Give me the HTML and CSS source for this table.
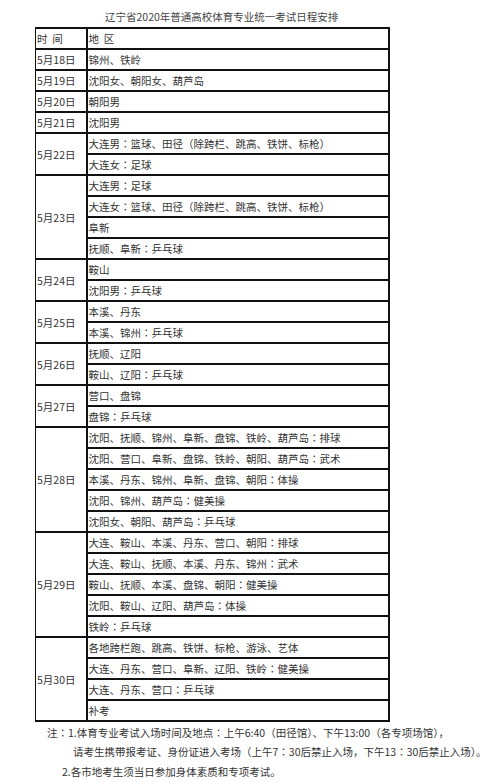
FILE: index.html
```html
<!DOCTYPE html>
<html lang="zh-CN">
<head>
<meta charset="utf-8">
<title>辽宁省2020年普通高校体育专业统一考试日程安排</title>
<link rel="stylesheet" href="styles.css">
</head>
<body>
<div class="page">
  <div class="title">辽宁省2020年普通高校体育专业统一考试日程安排</div>
  <table class="sched">
    <colgroup><col class="c-date"><col class="c-area"></colgroup>
    <tr><td class="hd">时&nbsp;&nbsp;间</td><td>地&nbsp;&nbsp;区</td></tr>
    <tr><td>5月18日</td><td>锦州、铁岭</td></tr>
    <tr><td>5月19日</td><td>沈阳女、朝阳女、葫芦岛</td></tr>
    <tr><td>5月20日</td><td>朝阳男</td></tr>
    <tr><td>5月21日</td><td>沈阳男</td></tr>
    <tr><td rowspan="2">5月22日</td><td>大连男<span class="co" lang="ja">：</span>篮球、田径（除跨栏、跳高、铁饼、标枪）</td></tr>
    <tr><td>大连女<span class="co" lang="ja">：</span>足球</td></tr>
    <tr><td rowspan="4">5月23日</td><td>大连男<span class="co" lang="ja">：</span>足球</td></tr>
    <tr><td>大连女<span class="co" lang="ja">：</span>篮球、田径（除跨栏、跳高、铁饼、标枪）</td></tr>
    <tr><td>阜新</td></tr>
    <tr><td>抚顺、阜新<span class="co" lang="ja">：</span>乒乓球</td></tr>
    <tr><td rowspan="2">5月24日</td><td>鞍山</td></tr>
    <tr><td>沈阳男<span class="co" lang="ja">：</span>乒乓球</td></tr>
    <tr><td rowspan="2">5月25日</td><td>本溪、丹东</td></tr>
    <tr><td>本溪、锦州<span class="co" lang="ja">：</span>乒乓球</td></tr>
    <tr><td rowspan="2">5月26日</td><td>抚顺、辽阳</td></tr>
    <tr><td>鞍山、辽阳<span class="co" lang="ja">：</span>乒乓球</td></tr>
    <tr><td rowspan="2">5月27日</td><td>营口、盘锦</td></tr>
    <tr><td>盘锦<span class="co" lang="ja">：</span>乒乓球</td></tr>
    <tr><td rowspan="5">5月28日</td><td>沈阳、抚顺、锦州、阜新、盘锦、铁岭、葫芦岛<span class="co" lang="ja">：</span>排球</td></tr>
    <tr><td>沈阳、营口、阜新、盘锦、铁岭、朝阳、葫芦岛<span class="co" lang="ja">：</span>武术</td></tr>
    <tr><td>本溪、丹东、锦州、阜新、盘锦、朝阳<span class="co" lang="ja">：</span>体操</td></tr>
    <tr><td>沈阳、锦州、葫芦岛<span class="co" lang="ja">：</span>健美操</td></tr>
    <tr><td>沈阳女、朝阳、葫芦岛<span class="co" lang="ja">：</span>乒乓球</td></tr>
    <tr><td rowspan="5">5月29日</td><td>大连、鞍山、本溪、丹东、营口、朝阳<span class="co" lang="ja">：</span>排球</td></tr>
    <tr><td>大连、鞍山、抚顺、本溪、丹东、锦州<span class="co" lang="ja">：</span>武术</td></tr>
    <tr><td>鞍山、抚顺、本溪、盘锦、朝阳<span class="co" lang="ja">：</span>健美操</td></tr>
    <tr><td>沈阳、鞍山、辽阳、葫芦岛<span class="co" lang="ja">：</span>体操</td></tr>
    <tr><td>铁岭<span class="co" lang="ja">：</span>乒乓球</td></tr>
    <tr><td rowspan="4">5月30日</td><td>各地跨栏跑、跳高、铁饼、标枪、游泳、艺体</td></tr>
    <tr><td>大连、丹东、营口、阜新、辽阳、铁岭<span class="co" lang="ja">：</span>健美操</td></tr>
    <tr><td>大连、丹东、营口<span class="co" lang="ja">：</span>乒乓球</td></tr>
    <tr><td>补考</td></tr>
  </table>
  <div class="notes">
    <p class="n1">注<span class="co" lang="ja">：</span>1.体育专业考试入场时间及地点<span class="co" lang="ja">：</span>上午6:40（田径馆）、下午13:00（各专项场馆），</p>
    <p class="n2">请考生携带报考证、身份证进入考场（上午7<span class="co" lang="ja">：</span>30后禁止入场，下午13<span class="co" lang="ja">：</span>30后禁止入场）。</p>
    <p class="n3">2.各市地考生须当日参加身体素质和专项考试。</p>
  </div>
</div>
</body>
</html>
```

FILE: styles.css
```css
html, body {
  margin: 0;
  padding: 0;
  background: #ffffff;
}
.page {
  width: 499px;
  font-family: "Noto Sans CJK SC", "Noto Sans", sans-serif;
  font-size: 10.5px;
  color: #333333;
}
.co {
  font-family: "Noto Sans CJK JP", "Noto Sans CJK SC", sans-serif;
}
.title {
  padding: 10px 0 0 105px;
  line-height: 14px;
  height: 14px;
  color: #444444;
  white-space: nowrap;
}
.sched {
  margin: 3px 0 0 35px;
  border-collapse: collapse;
  width: 353px;
  table-layout: fixed;
}
.c-date { width: 51px; }
.c-area { width: 302px; }
.sched td {
  border: 2px solid #111111;
  height: 19px;
  padding: 0 0 0 1px;
  line-height: 19px;
  white-space: nowrap;
  vertical-align: middle;
  text-align: left;
}
.sched tr > td:first-child {
  border-left-width: 1px;
}
.notes {
  margin-top: 1px;
}
.notes p {
  margin: 0;
  line-height: 19.3px;
  white-space: nowrap;
}
.n1 { padding-left: 47px; }
.n2 { padding-left: 73px; }
.n3 { padding-left: 62px; }
```
